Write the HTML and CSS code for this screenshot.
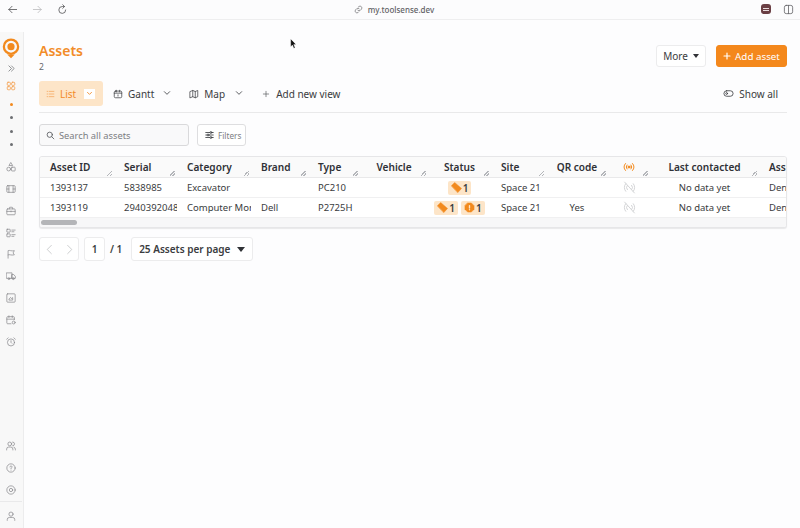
FILE: index.html
```html
<!DOCTYPE html>
<html lang="en">
<head>
<meta charset="utf-8">
<title>Assets</title>
<link rel="stylesheet" href="styles.css">
</head>
<body>
<header class="browser">
  <div class="nav">
    <svg class="bi" viewBox="0 0 24 24"><path d="M21 12H4M11 5l-7 7 7 7"/></svg>
    <svg class="bi off" viewBox="0 0 24 24"><path d="M3 12h17M13 5l7 7-7 7"/></svg>
    <svg class="bi" viewBox="0 0 24 24"><path d="M19 13a7.500 7.500 0 1 1-7.500-7.500H16M12.500 1.500l4 4-4 4"/></svg>
  </div>
  <div class="url">
    <svg class="link" viewBox="0 0 24 24"><path d="M10 14a5 5 0 0 0 7 0l3-3a5 5 0 0 0-7-7l-1.500 1.500M14 10a5 5 0 0 0-7 0l-3 3a5 5 0 0 0 7 7l1.500-1.500"/></svg>
    <span>my.toolsense.dev</span>
  </div>
  <div class="tools">
    <span class="ext"><i></i><i></i></span>
    <svg class="bi split" viewBox="0 0 24 24"><rect x="3" y="3" width="18" height="18" rx="4"/><path d="M12 3v18"/></svg>
  </div>
</header>
<div class="app">
  <aside class="side">
    <svg class="logo" viewBox="0 0 24 28"><circle cx="12" cy="11.500" r="9.500" fill="none" stroke="#f28a1e" stroke-width="3"/><circle cx="12" cy="11.500" r="4.800" fill="#f28a1e"/><path d="M7 22h10l-5 5z" fill="#f28a1e"/></svg>
    <svg class="si expand" viewBox="0 0 24 24"><path d="M5 5l7 7-7 7M12 5l7 7-7 7"/></svg>
    <svg class="si act" viewBox="0 0 24 24"><rect x="3" y="3" width="7.500" height="7.500" rx="2"/><rect x="13.500" y="3" width="7.500" height="7.500" rx="2"/><rect x="3" y="13.500" width="7.500" height="7.500" rx="2"/><rect x="13.500" y="13.500" width="7.500" height="7.500" rx="2"/></svg>
    <div class="dots"><b class="on"></b><b></b><b></b><b></b></div>
    <div class="group">
      <svg class="si" viewBox="0 0 24 24"><path d="M12 2l4 6.500H8z"/><circle cx="6.500" cy="17" r="4.500"/><rect x="13" y="12.500" width="9" height="9" rx="1.500"/></svg>
      <svg class="si" viewBox="0 0 24 24"><rect x="2" y="4" width="20" height="16" rx="2"/><path d="M7 4v16M17 4v16M2 12h5M17 12h5"/></svg>
      <svg class="si" viewBox="0 0 24 24"><rect x="2" y="7" width="20" height="14" rx="2"/><path d="M8 7V4.500A1.500 1.500 0 0 1 9.500 3h5A1.500 1.500 0 0 1 16 4.500V7M2 13h20M12 12v2"/></svg>
      <svg class="si" viewBox="0 0 24 24"><rect x="2" y="3" width="8" height="7" rx="1"/><rect x="2" y="14" width="8" height="7" rx="1"/><path d="M14 5h8M14 9h5M14 16h8M14 20h5"/></svg>
      <svg class="si" viewBox="0 0 24 24"><path d="M5 22V4c4-2 7 2 15 0l-3 5.500L20 14c-8 2-11-2-15 0"/></svg>
      <svg class="si" viewBox="0 0 24 24"><path d="M1.500 4.500h13v13h-13zM14.500 8.500h4l4 4.500v4.500h-8z"/><circle cx="7" cy="18.500" r="2.200"/><circle cx="17.500" cy="18.500" r="2.200"/></svg>
      <svg class="si" viewBox="0 0 24 24"><rect x="2" y="2" width="20" height="20" rx="2"/><path d="M8 17h8v-6l-3 2.500-2-3-3 3z"/></svg>
      <svg class="si" viewBox="0 0 24 24"><path d="M12 21H4a2 2 0 0 1-2-2V6a2 2 0 0 1 2-2h14a2 2 0 0 1 2 2v5M2 10h18M7 2v4M15 2v4"/><circle cx="18.500" cy="18" r="3.500"/></svg>
      <svg class="si" viewBox="0 0 24 24"><circle cx="12" cy="13" r="8.500"/><path d="M12 9v4l2 2M5 2L1.500 5.500M19 2l3.500 3.500"/></svg>
    </div>
    <div class="group low">
      <svg class="si" viewBox="0 0 24 24"><circle cx="9" cy="7" r="4.500"/><path d="M1.500 21.500v-2a5 5 0 0 1 5-5h5a5 5 0 0 1 5 5v2M16 2.500a4.500 4.500 0 0 1 0 9M22.500 21.500v-2a5 5 0 0 0-3.500-4.700"/></svg>
      <svg class="si" viewBox="0 0 24 24"><circle cx="12" cy="12" r="10"/><path d="M9.500 9.500a2.500 2.500 0 1 1 3.500 2.300c-.7.400-1 .9-1 1.700M12 17v.1"/></svg>
      <svg class="si" viewBox="0 0 24 24"><circle cx="12" cy="12" r="10"/><circle cx="12" cy="12" r="4"/></svg>
    </div>
    <div class="me">
      <svg class="si" viewBox="0 0 24 24"><circle cx="12" cy="7.500" r="5"/><path d="M3 22.500v-2a5 5 0 0 1 5-5h8a5 5 0 0 1 5 5v2"/></svg>
    </div>
  </aside>
  <main class="main">
    <section class="head">
      <div>
        <h1 class="title">Assets</h1>
        <div class="count">2</div>
      </div>
      <div class="actions">
        <button class="more">More<i class="caret"></i></button>
        <button class="add"><svg class="plus" viewBox="0 0 24 24"><path d="M12 3v18M3 12h18"/></svg>Add asset</button>
      </div>
    </section>
    <nav class="views">
      <div class="tab list">
        <svg class="ti" viewBox="0 0 24 24"><path d="M3 5h2M9 5h12M3 12h2M9 12h12M3 19h2M9 19h12"/></svg>
        <span>List</span>
        <span class="drop"><svg viewBox="0 0 24 24"><path d="M5 8l7 7 7-7"/></svg></span>
      </div>
      <div class="tab gantt">
        <svg class="ti" viewBox="0 0 24 24"><rect x="3" y="5" width="18" height="16" rx="3"/><path d="M3 10h18M8 3v4M16 3v4M12 14v3"/></svg>
        <span>Gantt</span>
        <svg class="chev" viewBox="0 0 24 24"><path d="M4 8l8 8 8-8"/></svg>
      </div>
      <div class="tab map">
        <svg class="ti" viewBox="0 0 24 24"><path d="M3 6l6-2.500 6 2.500 6-2.500v15l-6 2.500-6-2.500-6 2.500zM9 3.500v15M15 6v15"/></svg>
        <span>Map</span>
        <svg class="chev" viewBox="0 0 24 24"><path d="M4 8l8 8 8-8"/></svg>
      </div>
      <div class="tab new">
        <svg class="tp" viewBox="0 0 24 24"><path d="M12 4v16M4 12h16"/></svg>
        <span>Add new view</span>
      </div>
      <div class="tab all">
        <svg class="ti" viewBox="0 0 24 24"><rect x="2" y="6" width="20" height="12" rx="6"/><circle cx="8" cy="12" r="2"/></svg>
        <span>Show all</span>
      </div>
    </nav>
    <section class="filters">
      <label class="search">
        <svg viewBox="0 0 24 24"><circle cx="10" cy="10" r="7"/><path d="M15.500 15.500L21 21"/></svg>
        <span>Search all assets</span>
      </label>
      <button class="filter">
        <svg viewBox="0 0 24 24"><path d="M3 6h10M18 6h3M3 12h3M11 12h10M3 18h10M18 18h3"/><circle cx="15.500" cy="6" r="2.300"/><circle cx="8.500" cy="12" r="2.300"/><circle cx="15.500" cy="18" r="2.300"/></svg>
        <span>Filters</span>
      </button>
    </section>
    <section class="table">
      <div class="row hd">
        <div class="c"><span>Asset ID</span><i class="grip"></i></div>
        <div class="c"><span>Serial</span><i class="grip"></i></div>
        <div class="c"><span>Category</span><i class="grip"></i></div>
        <div class="c"><span>Brand</span><i class="grip"></i></div>
        <div class="c"><span>Type</span><i class="grip"></i></div>
        <div class="c mid"><span>Vehicle</span><i class="grip"></i></div>
        <div class="c mid"><span>Status</span><i class="grip"></i></div>
        <div class="c"><span>Site</span><i class="grip"></i></div>
        <div class="c mid"><span>QR code</span><i class="grip"></i></div>
        <div class="c mid"><svg class="sig" viewBox="0 0 24 24"><circle cx="12" cy="12" r="2" fill="#f28a1e"/><path d="M8 8a6 6 0 0 0 0 8M16 8a6 6 0 0 1 0 8M5 5a10.500 10.500 0 0 0 0 14M19 5a10.500 10.500 0 0 1 0 14"/></svg><i class="grip"></i></div>
        <div class="c mid"><span>Last contacted</span><i class="grip"></i></div>
        <div class="c"><span>Assigned to</span></div>
      </div>
      <div class="row">
        <div class="c">1393137</div>
        <div class="c">5838985</div>
        <div class="c">Excavator</div>
        <div class="c"></div>
        <div class="c">PC210</div>
        <div class="c"></div>
        <div class="c mid badges">
          <span class="badge"><svg viewBox="0 0 24 24"><path d="M1 8l7-7 15 13-8 9z"/></svg>1</span>
        </div>
        <div class="c">Space 21</div>
        <div class="c"></div>
        <div class="c mid"><svg class="nosig" viewBox="0 0 24 24"><path d="M8 8a6 6 0 0 0 0 8M16 8a6 6 0 0 1 0 8M5 5a10.500 10.500 0 0 0 0 14M19 5a10.500 10.500 0 0 1 0 14M3 2l18 20"/></svg></div>
        <div class="c mid">No data yet</div>
        <div class="c">Denis Novak</div>
      </div>
      <div class="row">
        <div class="c">1393119</div>
        <div class="c">2940392048</div>
        <div class="c">Computer Monitor</div>
        <div class="c">Dell</div>
        <div class="c">P2725H</div>
        <div class="c"></div>
        <div class="c mid badges">
          <span class="badge"><svg viewBox="0 0 24 24"><path d="M1 8l7-7 15 13-8 9z"/></svg>1</span>
          <span class="badge"><svg viewBox="0 0 24 24"><path d="M8 2h8l6 6v8l-6 6H8l-6-6V8z"/><path class="ex" d="M12 8v5M12 16.500v.5"/></svg>1</span>
        </div>
        <div class="c">Space 21</div>
        <div class="c mid">Yes</div>
        <div class="c mid"><svg class="nosig" viewBox="0 0 24 24"><path d="M8 8a6 6 0 0 0 0 8M16 8a6 6 0 0 1 0 8M5 5a10.500 10.500 0 0 0 0 14M19 5a10.500 10.500 0 0 1 0 14M3 2l18 20"/></svg></div>
        <div class="c mid">No data yet</div>
        <div class="c">Denis Novak</div>
      </div>
      <div class="scroll"><div class="thumb"></div></div>
    </section>
    <section class="pager">
      <div class="pbox arrows">
        <svg viewBox="0 0 24 24"><path d="M16 3l-9 9 9 9"/></svg>
        <svg viewBox="0 0 24 24"><path d="M8 3l9 9-9 9"/></svg>
      </div>
      <div class="pbox num">1</div>
      <span class="total">/ 1</span>
      <div class="pbox size">25 Assets per page<i class="caret big"></i></div>
    </section>
  </main>
</div>
<svg class="cursor" viewBox="0 0 10 14"><path d="M1 0v11l2.500-2.500L5.500 13l1.800-.8-2-4.400H8.500z" fill="#111" stroke="#fff" stroke-width=".5"/></svg>
</body>
</html>
```
FILE: styles.css
```css
* { box-sizing: border-box; }
html, body { margin: 0; height: 100%; }
body {
  width: 800px;
  height: 528px;
  overflow: hidden;
  position: relative;
  background: #fdfdfe;
  color: #2f3136;
  font-family: "Noto Sans", "Liberation Sans", sans-serif;
  font-size: 9.500px;
}
svg { display: block; fill: none; stroke: currentColor; stroke-width: 2; stroke-linecap: round; stroke-linejoin: round; }
button { font-family: inherit; }

.browser {
  height: 20px;
  display: flex;
  align-items: center;
  justify-content: space-between;
  padding: 0 6px 1px 7px;
  background: #fcfcfd;
  border-bottom: 1px solid #eeeeef;
}
.nav { display: flex; gap: 14px; width: 287px; }
.bi { width: 11px; height: 11px; color: #565659; stroke-width: 1.800; }
.bi.off { color: #bcbcbf; }
.url { display: flex; align-items: center; gap: 5px; color: #626266; font-size: 8px; font-weight: 500; }
.link { width: 9px; height: 9px; stroke-width: 2; color: #77777a; }
.tools { display: flex; align-items: center; justify-content: flex-end; gap: 12px; width: 300px; }
.ext {
  width: 10px; height: 10px; border-radius: 3px; background: #6a3f44;
  display: flex; flex-direction: column; justify-content: center; gap: 1px; padding: 0 2px;
}
.ext i { display: block; height: 1px; background: #e8dcdc; }
.split { width: 11px; height: 11px; color: #66666a; stroke-width: 1.800; }

.app { display: flex; height: 508px; }
.side {
  width: 24px;
  margin-top: 12px;
  background: #f8f8f8;
  border-right: 1px solid #ececed;
  display: flex;
  flex-direction: column;
  align-items: center;
  flex: none;
  color: #85858a;
  padding-right: 1px;
}
.logo { width: 18px; height: 21px; margin-top: 6px; stroke: none; }
.si { width: 10px; height: 10px; flex: none; stroke-width: 1.700; }
.expand { margin-top: 5px; color: #55585c; width: 9px; height: 9px; }
.act { margin-top: 8px; color: #f4a65c; width: 10px; height: 10px; stroke-width: 2.200; }
.dots { display: flex; flex-direction: column; align-items: center; gap: 10.300px; margin-top: 12px; }
.dots b { display: block; width: 3px; height: 3px; border-radius: 50%; background: #6c6e72; }
.dots b.on { background: #f28a1e; }
.group { display: flex; flex-direction: column; align-items: center; gap: 11.900px; margin-top: 16px; }
.group.low { margin-top: auto; }
.me { width: 100%; margin-top: 6px; border-top: 1px solid #e9e9ea; padding: 9px 0 8px; display: flex; justify-content: center; height: 27px; }

.main { flex: 1; min-width: 0; padding: 25px 13px 0 15px; }
.head { display: flex; justify-content: space-between; align-items: flex-start; }
.title { margin: -4px 0 0; color: #f28c28; font-size: 14px; font-weight: 600; line-height: 20px; }
.count { font-size: 8.500px; line-height: 11px; color: #66686c; }
.actions { display: flex; gap: 10px; }
.more, .add {
  height: 22px; border-radius: 3px; font-size: 10px; display: flex; align-items: center; padding: 0; cursor: pointer;
}
.more { width: 50px; justify-content: center; gap: 5px; background: #fff; border: 1px solid #ececed; color: #3a3c40; }
.add { width: 71px; justify-content: center; gap: 4px; background: #f4881c; border: 1px solid #f4881c; color: #fff; font-size: 9.800px; }
.plus { width: 8px; height: 8px; stroke-width: 3.500; color: #fff; }
.caret { display: block; width: 0; height: 0; border-left: 3.500px solid transparent; border-right: 3.500px solid transparent; border-top: 4px solid #303236; }
.caret.big { border-left-width: 4.500px; border-right-width: 4.500px; border-top-width: 5px; margin-left: 7px; }

.views {
  display: flex;
  align-items: center;
  height: 32px;
  margin-top: 9px;
  padding-bottom: 6px;
  border-bottom: 1px solid #e9e9ea;
  font-size: 10px;
  color: #3a3c40;
}
.tab { display: flex; align-items: center; height: 25px; }
.ti { width: 10px; height: 10px; flex: none; stroke-width: 1.800; color: #3c3e42; }
.list { width: 64px; background: #fde5c8; border-radius: 3px; padding-left: 7px; color: #f28c28; gap: 5px; }
.list .ti { color: #f4a050; width: 9px; }
.drop { width: 11px; height: 10px; background: #fff; margin-left: 3px; display: flex; align-items: center; justify-content: center; color: #f28c28; }
.drop svg { width: 7px; height: 7px; stroke-width: 3; }
.gantt { margin-left: 10px; gap: 5px; }
.map { margin-left: 18px; gap: 5px; }
.chev { width: 8px; height: 8px; stroke-width: 2.500; color: #3c3e42; margin-left: 4px; margin-top: -2px; }
.map .chev { margin-left: 5px; }
.new { margin-left: 19px; gap: 6px; }
.tp { width: 8px; height: 8px; stroke-width: 2; color: #55585c; }
.all { margin-left: auto; margin-right: 9px; gap: 5px; }
.all .ti { width: 11px; height: 11px; }

.filters { display: flex; gap: 8px; margin-top: 11px; }
.search, .filter {
  height: 22px; border: 1px solid #dedee0; border-radius: 3px; display: flex; align-items: center; background: #fbfbfb;
  font-size: 9.300px; color: #7b7d82;
}
.search { width: 150px; padding-left: 6px; gap: 4px; background: #f9f9fa; border-color: #d9d9db; }
.search svg { width: 9px; height: 9px; color: #55585c; stroke-width: 2.200; }
.filter { width: 49px; padding: 0 0 0 6px; gap: 3px; background: #fff; font-size: 8.200px; }
.filter svg { width: 11px; height: 10px; color: #3c3e42; stroke-width: 2; }

.table {
  margin-top: 10px;
  width: 748px;
  height: 72px;
  border: 1px solid #e6e6e8;
  border-radius: 3px;
  background: #fff;
  overflow: hidden;
  box-shadow: 0 1px 1px #e8e8e9;
}
.row {
  display: grid;
  grid-template-columns: 74px 63px 74px 57px 52px 68px 63px 55px 62px 42px 109px 60px;
  height: 20px;
  border-bottom: 1px solid #f0f0f1;
  align-items: center;
}
.c { position: relative; height: 100%; display: flex; align-items: center; padding-left: 10px; overflow: hidden; white-space: nowrap; color: #3a3c40; font-size: 9.500px; }
.c.mid { justify-content: center; padding-left: 0; }
.hd { height: 21px; background: #fafafa; border-bottom-color: #e9e9ea; }
.hd .c { font-weight: 600; color: #2f3136; font-size: 10.100px; }
.grip {
  position: absolute; right: 2px; bottom: 1px; width: 5px; height: 5px;
  background: linear-gradient(135deg, transparent 40%, #b4b6ba 40%, #b4b6ba 54%, transparent 54%, transparent 70%, #b4b6ba 70%, #b4b6ba 84%, transparent 84%);
}
.sig { width: 12px; height: 12px; color: #f28a1e; stroke-width: 2; }
.nosig { width: 13px; height: 13px; color: #d2d3d5; stroke-width: 1.800; }
.badges { gap: 3px; }
.badge { display: flex; align-items: center; gap: 1px; height: 14px; padding: 0 3px; background: #fde5c8; border-radius: 2px; font-weight: 600; font-size: 10px; color: #3a3c40; }
.badge svg { width: 11px; height: 11px; fill: #f28a1e; stroke: #f28a1e; stroke-width: 1; }
.badge .ex { stroke: #fde5c8; stroke-width: 3; fill: none; }
.scroll { height: 9px; background: #f7f7f8; padding: 2px 1px 0; }
.thumb { width: 36px; height: 5px; border-radius: 3px; background: #b4b5b8; }

.pager { display: flex; align-items: center; margin-top: 9px; color: #3a3c40; font-weight: 500; font-size: 10px; }
.pbox { height: 24px; border: 1px solid #ececed; border-radius: 3px; background: #fff; display: flex; align-items: center; justify-content: center; }
.arrows { width: 40px; gap: 9px; color: #c2c3c5; }
.arrows svg { width: 11px; height: 11px; stroke-width: 1.800; }
.num { width: 21px; margin-left: 5px; font-weight: 600; }
.total { margin-left: 5px; font-weight: 600; }
.size { width: 122px; margin-left: 9px; font-weight: 600; }

.cursor { position: absolute; left: 290px; top: 39px; width: 7px; height: 10px; stroke: none; }
```
